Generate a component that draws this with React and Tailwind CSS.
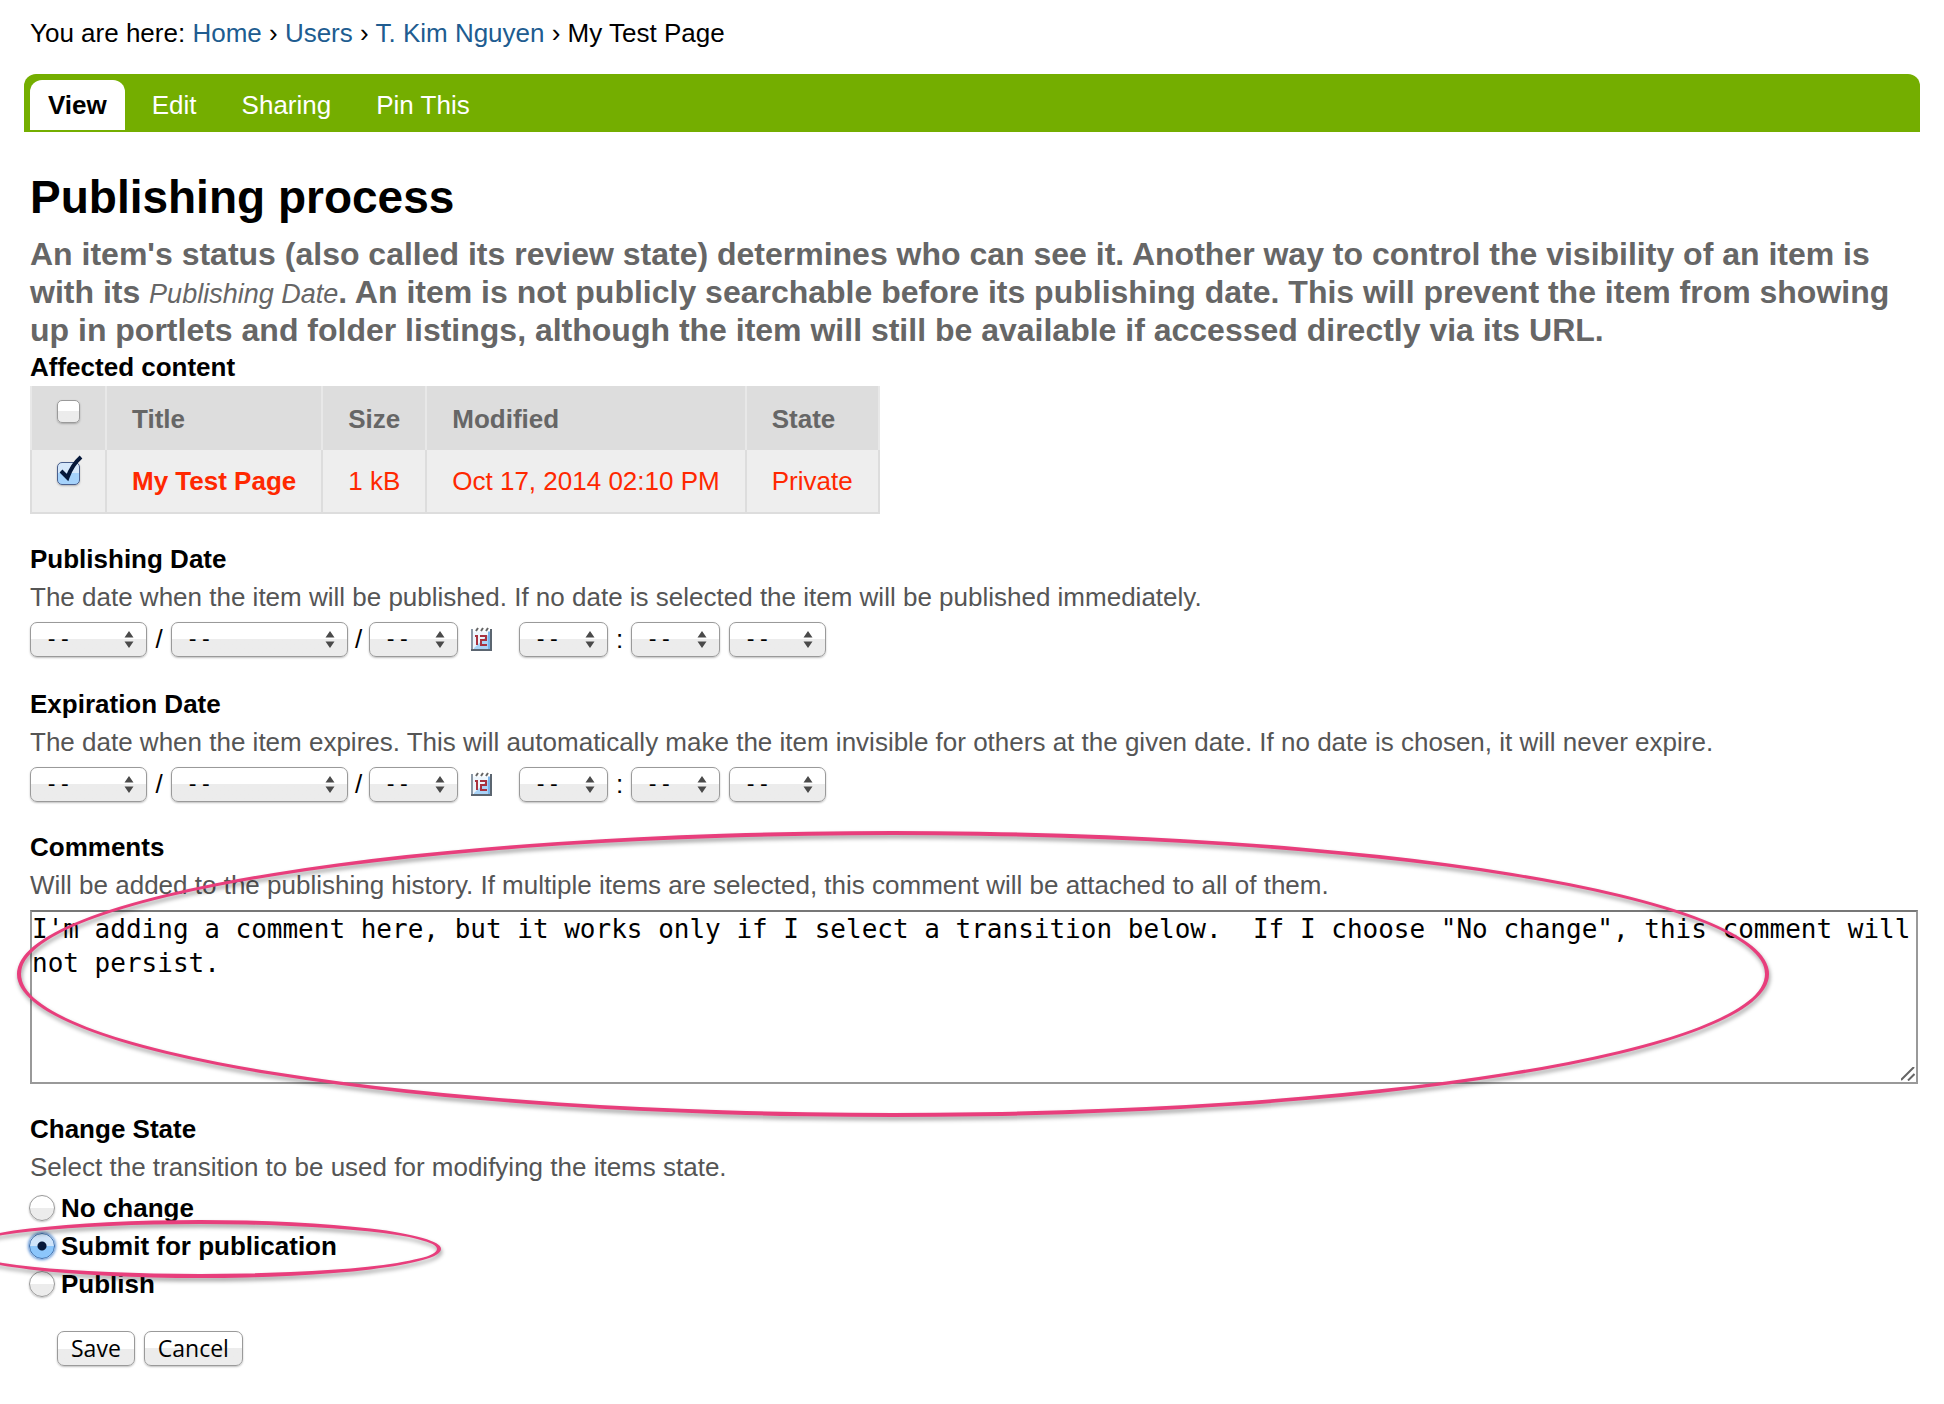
import React from "react";

const CONTROL =
  "border border-[#9a9a9a] bg-linear-to-b from-white from-50% to-[#ececec] to-50% shadow-[0_1px_2px_rgba(0,0,0,0.25)]";

function Field({ children }) {
  return <section className="mb-[27px]">{children}</section>;
}

function Label({ children, ...rest }) {
  return (
    <label className="block font-bold" {...rest}>
      {children}
    </label>
  );
}

function Help({ children }) {
  return <p className="text-[#555]">{children}</p>;
}

function Picker({ label, width, className = "" }) {
  return (
    <span className={`relative inline-flex ${width} ${className}`}>
      <select
        aria-label={label}
        className={`h-[35px] w-full appearance-none rounded-[7px] pl-[14px] font-['DejaVu_Sans_Mono',monospace] text-[22px] leading-[30px] text-black ${CONTROL}`}
      >
        <option>--</option>
      </select>
      <svg viewBox="0 0 10 17" className="pointer-events-none absolute top-[9px] right-[13px] h-[17px] w-[10px]" fill="#4a4a4a">
        <path d="M5 0 9.5 6.5H.5zM5 17 .5 10.5h9z" />
      </svg>
    </span>
  );
}

function CalendarIcon() {
  return (
    <svg viewBox="0 0 22 26" className="h-[26px] w-[22px]">
      <rect x="1" y="3" width="19" height="21" fill="#eef6fd" />
      <path d="M3 22 18 8v15H3z" fill="#a9d3f7" />
      <path d="M1 3v21" stroke="#8b98a6" strokeWidth="2" />
      <path d="M0 24h21M20 3v22" stroke="#5b6570" strokeWidth="2" fill="none" />
      <path d="M18 5v18" stroke="#79b4ea" strokeWidth="2" />
      <path d="M2 4h17" stroke="#fff" strokeWidth="3" />
      <path d="M5 5l2-3M10 5l2-3M15 5l2-3" stroke="#666" strokeWidth="2" />
      <path d="M4 10h2v9M9 10h6v4h-5v5h6" fill="none" stroke="#a83240" strokeWidth="2" />
    </svg>
  );
}

function DateRow({ name }) {
  return (
    <div className="mt-1 flex h-[38px] items-center">
      <Picker label={`${name} year`} width="w-[117px]" />
      <span className="w-6 text-center">/</span>
      <Picker label={`${name} month`} width="w-[177px]" />
      <span className="w-[21px] text-center">/</span>
      <Picker label={`${name} day`} width="w-[89px]" />
      <button type="button" aria-label={`Pick ${name.toLowerCase()}`} className="mr-[26px] ml-[13px] flex">
        <CalendarIcon />
      </button>
      <Picker label={`${name} hour`} width="w-[89px]" />
      <span className="w-[23px] text-center">:</span>
      <Picker label={`${name} minute`} width="w-[89px]" />
      <Picker label={`${name} AM or PM`} width="w-[97px]" className="ml-[9px]" />
    </div>
  );
}

function Check({ label, checked }) {
  return (
    <span className="relative mb-4 flex">
      <input
        type="checkbox"
        aria-label={label}
        defaultChecked={checked}
        className={`peer size-[23px] appearance-none rounded-[5px] checked:border-[#4a5f8c] checked:from-[#d6e8fb] checked:to-[#a5d2fb] ${CONTROL}`}
      />
      <svg viewBox="0 0 26 30" className="pointer-events-none absolute -top-2 left-0 hidden h-[30px] w-[26px] peer-checked:block" fill="none" stroke="#06183a" strokeWidth="4">
        <path d="M4 17 10.500 23.500Q15 11 24 3" />
      </svg>
    </span>
  );
}

function Choice({ label, checked }) {
  return (
    <label className="flex items-center gap-[6px] font-bold">
      <input
        type="radio"
        name="transition"
        defaultChecked={checked}
        className={`-ml-px size-[26px] appearance-none rounded-full checked:border-[#3c6fae] checked:bg-[radial-gradient(circle,#06183a_0_4px,transparent_5px),linear-gradient(#cfe4fa_50%,#8cc6fb_50%)] checked:shadow-[0_0_3px_1px_#5b92d6] ${CONTROL}`}
      />
      {label}
    </label>
  );
}

function Ring({ className }) {
  return (
    <div
      aria-hidden="true"
      className={`pointer-events-none absolute rounded-[50%] border-4 border-[#e83e7c] drop-shadow-[1px_3px_2px_rgba(0,0,0,0.4)] ${className}`}
    />
  );
}

const TABS = ["Edit", "Sharing", "Pin This"];
const COLUMNS = ["Title", "Size", "Modified", "State"];

export default function App() {
  const link = "text-[#205c90]";
  const cell = "border-x-2 px-[25px] text-left";
  return (
    <div className="min-h-screen overflow-x-hidden bg-white px-6 pt-[14px] pb-[38px] font-['Liberation_Sans',Arial,sans-serif] text-[26px] leading-[38px] text-black">
      <nav aria-label="Breadcrumb" className="px-[6px]">
        You are here: <a href="#home" className={link}>Home</a> ›{" "}
        <a href="#users" className={link}>Users</a> ›{" "}
        <a href="#profile" className={link}>T. Kim Nguyen</a> › My Test Page
      </nav>

      <nav aria-label="Page" className="mt-[22px] flex h-[58px] gap-[9px] rounded-t-[12px] bg-[#74ae00] px-[6px] pt-[6px] pb-[2px] text-white">
        <a href="#view" className="flex items-center rounded-t-[12px] bg-white px-[18px] font-bold text-black">View</a>
        {TABS.map((t) => (
          <a key={t} href={"#" + t} className="flex items-center px-[18px]">{t}</a>
        ))}
      </nav>

      <form className="px-[6px]" onSubmit={(e) => e.preventDefault()}>
        <h1 className="mt-[35px] text-[46px] leading-[60px] font-bold">Publishing process</h1>
        <p className="mt-2 text-[32px] font-bold text-[#666]">
          An item's status (also called its review state) determines who can see it. Another way to control the
          visibility of an item is with its <em className="text-[27px] leading-none font-normal">Publishing Date</em>. An item is
          not publicly searchable before its publishing date. This will prevent the item from showing up in portlets
          and folder listings, although the item will still be available if accessed directly via its URL.
        </p>

        <section className="mb-[26px]">
          <h2 className="-mt-px font-bold">Affected content</h2>
          <table className="border-collapse border-2 border-[#ddd]">
            <thead className="bg-[#ddd] text-[#666]">
              <tr className="h-[63px]">
                <th className={`border-[#e8e8e8] ${cell}`}><Check label="Select all" /></th>
                {COLUMNS.map((c) => (
                  <th key={c} className={`border-[#e8e8e8] ${cell}`}>{c}</th>
                ))}
              </tr>
            </thead>
            <tbody className="bg-[#eee] text-[#ff2800]">
              <tr className="h-[63px]">
                <td className={`border-[#ddd] ${cell}`}><Check label="Select My Test Page" checked /></td>
                <td className={`border-[#ddd] font-bold ${cell}`}>My Test Page</td>
                <td className={`border-[#ddd] ${cell}`}>1 kB</td>
                <td className={`border-[#ddd] ${cell}`}>Oct 17, 2014 02:10 PM</td>
                <td className={`border-[#ddd] ${cell}`}>Private</td>
              </tr>
            </tbody>
          </table>
        </section>

        <Field>
          <h2 className="font-bold">Publishing Date</h2>
          <Help>The date when the item will be published. If no date is selected the item will be published immediately.</Help>
          <DateRow name="Publishing date" />
        </Field>

        <section className="mb-[25px]">
          <h2 className="font-bold">Expiration Date</h2>
          <Help>The date when the item expires. This will automatically make the item invisible for others at the given date. If no date is chosen, it will never expire.</Help>
          <DateRow name="Expiration date" />
        </section>

        <section className="relative mb-[26px]">
          <Label htmlFor="comments">Comments</Label>
          <Help>Will be added to the publishing history. If multiple items are selected, this comment will be attached to all of them.</Help>
          <div className="relative -mr-1 mt-[6px]">
            <textarea
              id="comments"
              className="block h-[174px] w-full resize-none border-2 border-[#999] border-t-[#777] font-['DejaVu_Sans_Mono',monospace] text-[26px] leading-[34px]"
              defaultValue={'I\'m adding a comment here, but it works only if I select a transition below.  If I choose "No change", this comment will not persist.'}
            />
            <svg viewBox="0 0 14 14" className="pointer-events-none absolute right-[3px] bottom-[3px] size-[14px]" fill="none" stroke="#666" strokeWidth="2">
              <path d="M0 13 13 0M7 13.500 13.500 7" />
            </svg>
          </div>
          <Ring className="top-[3px] -left-[13px] h-[286px] w-[93%]" />
        </section>

        <fieldset>
          <legend className="font-bold">Change State</legend>
          <Help>Select the transition to be used for modifying the items state.</Help>
          <div className="mt-[3px]">
            <Choice label="No change" />
            <div className="relative">
              <Choice label="Submit for publication" checked />
              <Ring className="-top-[7px] -left-[71px] h-[58px] w-[482px]" />
            </div>
            <Choice label="Publish" />
          </div>
        </fieldset>

        <div className="mt-7 flex gap-[9px] px-[27px] font-['Open_Sans',sans-serif] text-[23px] leading-[33px]">
          <button type="submit" className={`rounded-[7px] px-[13px] ${CONTROL}`}>Save</button>
          <button type="button" className={`rounded-[7px] px-[13px] ${CONTROL}`}>Cancel</button>
        </div>
      </form>
    </div>
  );
}
